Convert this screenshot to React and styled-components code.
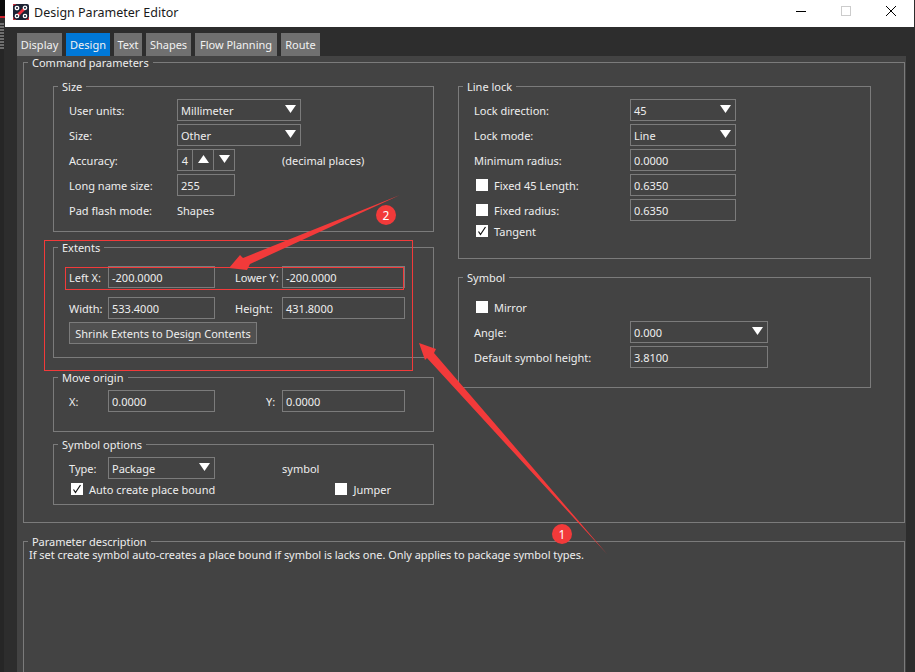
import React from 'react';
import styled, { createGlobalStyle } from 'styled-components';

const Global = createGlobalStyle`
  html, body { margin: 0; padding: 0; background: #2d2d2d; overflow: hidden; }
  * { box-sizing: border-box; }
`;

const LINE = '#7b7b7b';
const TEXT = '#eeeeee';

const Shell = styled.div`
  position: relative;
  width: 915px;
  height: 672px;
  overflow: hidden;
  background: #2d2d2d;
  color: ${TEXT};
  font-family: "Noto Sans", "Liberation Sans", sans-serif;
  font-size: 11px;
`;
const TitleBar = styled.header`
  height: 27px;
  margin: 0 1px 0 5px;
  background: #fff;
  color: #1a1a1a;
  display: flex;
  align-items: center;
  padding-left: 8px;
`;
const AppIcon = styled.svg`
  width: 16px;
  height: 16px;
  margin-top: -3px;
  flex: none;
`;
const Title = styled.h1`
  margin: -3px 0 0 5px;
  font-size: 12.5px;
  font-weight: 400;
  flex: 1;
`;
const WinButton = styled.div`
  width: 45px;
  height: 27px;
  display: flex;
  align-items: flex-start;
  justify-content: center;
  padding-top: 6px;
`;
const WinControls = styled.div`
  display: flex;
  margin-right: 1px;
`;
const Workspace = styled.div`
  height: 645px;
  padding: 6px 9px 0 17px;
  background: linear-gradient(90deg, #262626 0, #262626 4px, #2d2d2d 4px);
`;
const Tabs = styled.nav`
  display: flex;
  gap: 4px;
  height: 23px;
`;
const Tab = styled.div`
  width: ${p => p.$w}px;
  background: ${p => (p.$active ? '#0078d7' : '#707070')};
  color: #f2f2f2;
  display: flex;
  align-items: center;
  justify-content: center;
  white-space: nowrap;
`;
const Panel = styled.main`
  background: #434343;
  height: 620px;
  padding: 6px 1px 0 6px;
  overflow: hidden;
`;
const Group = styled.section`
  position: relative;
  border: 1px solid ${LINE};
  height: ${p => p.$h}px;
  margin-bottom: ${p => p.$mb || 0}px;
  padding: ${p => p.$pt || 12}px 0 0 15px;
`;
const Legend = styled.h2`
  position: absolute;
  top: -6px;
  left: 4px;
  margin: 0;
  padding: 0 4px;
  height: 12px;
  line-height: 12px;
  font-size: 11px;
  font-weight: 400;
  background: #434343;
  white-space: nowrap;
`;
const CommandGroup = styled(Group)`
  padding: 23px 0 0 29px;
`;
const Columns = styled.div`
  display: grid;
  grid-template-columns: 381px 413px;
  column-gap: 24px;
  align-items: start;
`;
const Column = styled.div`
  display: flex;
  flex-direction: column;
`;
const Form = styled.div`
  display: grid;
  grid-template-columns: ${p => p.$label}px 1fr;
  grid-auto-rows: 22px;
  row-gap: 3px;
  align-items: center;
  justify-items: start;
`;
const Label = styled.span`
  white-space: nowrap;
  padding-left: ${p => p.$indent || 0}px;
`;
const Control = styled.div`
  width: ${p => p.$w}px;
  height: 22px;
  border: 1px solid ${LINE};
  display: flex;
  align-items: center;
  justify-content: space-between;
  padding: 0 4px 0 3px;
  white-space: nowrap;
`;
const Caret = styled.svg`
  width: 11px;
  height: 8px;
  margin-top: -3px;
  flex: none;
`;
const SpinGroup = styled.div`
  display: flex;
  align-items: center;
`;
const Note = styled.span`
  margin-left: 47px;
  white-space: nowrap;
`;
const Spinner = styled.div`
  width: 58px;
  height: 22px;
  border: 1px solid ${LINE};
  display: grid;
  grid-template-columns: 14px 1fr 1fr;
`;
const SpinCell = styled.div`
  display: flex;
  align-items: center;
  justify-content: center;
  border-left: ${p => (p.$first ? 'none' : `1px solid ${LINE}`)};
`;
const TangentRow = styled.div`
  grid-column: 1 / -1;
  align-self: start;
  margin-top: -1px;
`;
const CheckRow = styled.label`
  display: flex;
  align-items: center;
  height: 16px;
  gap: 6px;
  padding-left: ${p => p.$pl ?? 2}px;
  margin-bottom: ${p => p.$mb || 0}px;
  white-space: nowrap;
`;
const CheckBox = styled.span`
  width: 12px;
  height: 12px;
  background: #fff;
  flex: none;
  display: flex;
`;
const ExtentGrid = styled.div`
  display: grid;
  grid-template-columns: 39px 107px 20px 47px 123px;
  grid-auto-rows: 22px;
  align-items: center;
  justify-items: start;
  row-gap: ${p => p.$gap || 0}px;
`;
const ActionButton = styled.button`
  display: block;
  margin-top: 3px;
  width: 188px;
  height: 22px;
  padding: 0;
  background: #505050;
  border: 1px solid ${LINE};
  color: ${TEXT};
  font: inherit;
`;
const SymbolFoot = styled.div`
  display: flex;
  justify-content: space-between;
  width: 322px;
  margin-top: 2px;
`;
const DescGroup = styled(Group)`
  margin-top: 18px;
  padding: 6px 0 0 5px;
  line-height: 13px;
  letter-spacing: -0.035px;
`;
const Overlay = styled.svg`
  position: absolute;
  inset: 0;
  width: 915px;
  height: 672px;
  pointer-events: none;
`;
const Badge = styled.div`
  position: absolute;
  left: ${p => p.$x - 10}px;
  top: ${p => p.$y - 10}px;
  width: 20px;
  height: 20px;
  border-radius: 50%;
  background: #f23a3a;
  color: #fff;
  font-size: 12px;
  display: flex;
  align-items: center;
  justify-content: center;
`;

const Arrow = ({ up }) => (
  <Caret viewBox="0 0 11 8">
    <polygon points={up ? '5.5,0 11,8 0,8' : '0,0 11,0 5.5,8'} fill="#fff" />
  </Caret>
);
const Select = ({ w, children }) => (
  <Control $w={w}>
    <span>{children}</span>
    <Arrow />
  </Control>
);
const Check = ({ checked }) => (
  <CheckBox>
    {checked && (
      <svg width="12" height="12" viewBox="0 0 12 12">
        <path d="M2.5 6.5 L4.5 9.5 L9.5 2" fill="none" stroke="#111" strokeWidth="1.2" />
      </svg>
    )}
  </CheckBox>
);

export default function App() {
  return (
    <Shell>
      <Global />
      <TitleBar>
        <AppIcon viewBox="0 0 16 16">
          <rect width="16" height="16" rx="2" fill="#1c2233" />
          <path d="M0 2V0H3M16 13v3h-3M0 13v3h3" stroke="#d02a35" strokeWidth="1.5" fill="none" />
          <path d="M3 13 L13 3" stroke="#ee2f3c" strokeWidth="2.8" />
          <g fill="#1c2233" stroke="#fff" strokeWidth="1.3">
            <circle cx="4" cy="4" r="1.7" />
            <circle cx="12" cy="3.8" r="1.7" />
            <circle cx="4" cy="12" r="1.7" />
            <circle cx="12" cy="12" r="1.7" />
          </g>
        </AppIcon>
        <Title>Design Parameter Editor</Title>
        <WinControls>
          <WinButton>
            <svg width="10" height="10" viewBox="0 0 10 10"><path d="M0 5.5H10" stroke="#000" /></svg>
          </WinButton>
          <WinButton>
            <svg width="10" height="10" viewBox="0 0 10 10"><rect x=".5" y=".5" width="9" height="9" fill="none" stroke="#ccc" /></svg>
          </WinButton>
          <WinButton>
            <svg width="10" height="10" viewBox="0 0 10 10"><path d="M0 0L10 10M10 0L0 10" stroke="#000" /></svg>
          </WinButton>
        </WinControls>
      </TitleBar>
      <Workspace>
        <Tabs>
          <Tab $w={45}>Display</Tab>
          <Tab $w={44} $active>Design</Tab>
          <Tab $w={28}>Text</Tab>
          <Tab $w={45}>Shapes</Tab>
          <Tab $w={82}>Flow Planning</Tab>
          <Tab $w={39}>Route</Tab>
        </Tabs>
        <Panel>
          <CommandGroup $h={461}>
            <Legend>Command parameters</Legend>
            <Columns>
              <Column>
                <Group $h={146} $mb={15} $pt={12}>
                  <Legend>Size</Legend>
                  <Form $label={108}>
                    <Label>User units:</Label><Select w={124}>Millimeter</Select>
                    <Label>Size:</Label><Select w={124}>Other</Select>
                    <Label>Accuracy:</Label>
                    <SpinGroup>
                      <Spinner>
                        <SpinCell $first>4</SpinCell>
                        <SpinCell><Arrow up /></SpinCell>
                        <SpinCell><Arrow /></SpinCell>
                      </Spinner>
                      <Note>(decimal places)</Note>
                    </SpinGroup>
                    <Label>Long name size:</Label><Control $w={58}>255</Control>
                    <Label>Pad flash mode:</Label><span>Shapes</span>
                  </Form>
                </Group>
                <Group $h={111} $mb={19} $pt={18}>
                  <Legend>Extents</Legend>
                  <ExtentGrid $gap={9}>
                    <Label>Left X:</Label><Control $w={107}>-200.0000</Control><span />
                    <Label>Lower Y:</Label><Control $w={123}>-200.0000</Control>
                    <Label>Width:</Label><Control $w={107}>533.4000</Control><span />
                    <Label>Height:</Label><Control $w={123}>431.8000</Control>
                  </ExtentGrid>
                  <ActionButton>Shrink Extents to Design Contents</ActionButton>
                </Group>
                <Group $h={55} $mb={12} $pt={12}>
                  <Legend>Move origin</Legend>
                  <ExtentGrid>
                    <Label>X:</Label><Control $w={107}>0.0000</Control><span />
                    <Label $indent={31}>Y:</Label><Control $w={123}>0.0000</Control>
                  </ExtentGrid>
                </Group>
                <Group $h={61} $pt={12}>
                  <Legend>Symbol options</Legend>
                  <ExtentGrid>
                    <Label>Type:</Label><Select w={107}>Package</Select><span /><span /><Label>symbol</Label>
                  </ExtentGrid>
                  <SymbolFoot>
                    <CheckRow><Check checked />Auto create place bound</CheckRow>
                    <CheckRow $pl={0}><Check />Jumper</CheckRow>
                  </SymbolFoot>
                </Group>
              </Column>
              <Column>
                <Group $h={173} $mb={18} $pt={12}>
                  <Legend>Line lock</Legend>
                  <Form $label={156}>
                    <Label>Lock direction:</Label><Select w={106}>45</Select>
                    <Label>Lock mode:</Label><Select w={106}>Line</Select>
                    <Label>Minimum radius:</Label><Control $w={106}>0.0000</Control>
                    <CheckRow><Check />Fixed 45 Length:</CheckRow><Control $w={106}>0.6350</Control>
                    <CheckRow><Check />Fixed radius:</CheckRow><Control $w={106}>0.6350</Control>
                    <TangentRow><CheckRow><Check checked />Tangent</CheckRow></TangentRow>
                  </Form>
                </Group>
                <Group $h={111} $pt={21}>
                  <Legend>Symbol</Legend>
                  <CheckRow $mb={6}><Check />Mirror</CheckRow>
                  <Form $label={156}>
                    <Label>Angle:</Label><Select w={138}>0.000</Select>
                    <Label>Default symbol height:</Label><Control $w={138}>3.8100</Control>
                  </Form>
                </Group>
              </Column>
            </Columns>
          </CommandGroup>
          <DescGroup $h={200}>
            <Legend>Parameter description</Legend>
            If set create symbol auto-creates a place bound if symbol is lacks one. Only applies to package symbol types.
          </DescGroup>
        </Panel>
      </Workspace>
      <Overlay viewBox="0 0 915 672">
        <rect x="0" y="0" width="5" height="16" fill="#0a0a0a" />
        <rect x="0" y="16" width="5" height="2" fill="#c8202a" />
        <path d="M0 24H4M0 27H4M0 30H4M0 33H4M0 36H4M0 39H4M0 42H4M0 45H4M0 48H4" stroke="#b5b5b5" />
        <rect x="44.5" y="240.5" width="368" height="130" fill="none" stroke="#f23a3a" />
        <rect x="65.5" y="267.5" width="338" height="22" fill="none" stroke="#f23a3a" />
        <polygon points="400,195 250,264 247,270 229,268 240,255 243,258" fill="#f23a3a" />
        <polygon points="607,554 434,353 436,349 419,343 425,360 427,358" fill="#f23a3a" />
      </Overlay>
      <Badge $x={562} $y={534}>1</Badge>
      <Badge $x={386} $y={215}>2</Badge>
    </Shell>
  );
}
